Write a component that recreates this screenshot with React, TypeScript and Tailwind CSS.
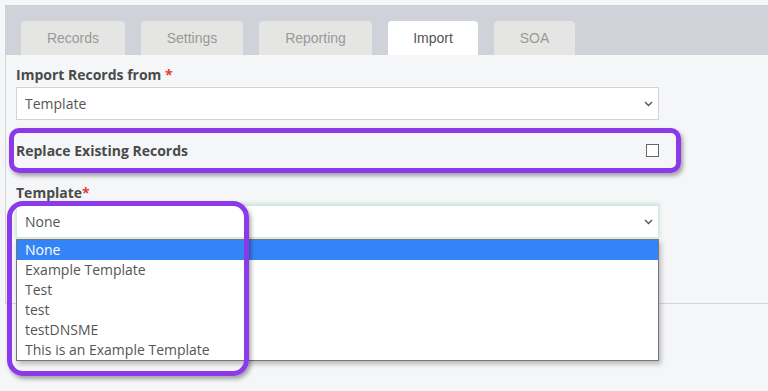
import React from "react";

const tabs = [
  { name: "Records", w: "w-[104px]" },
  { name: "Settings", w: "w-[102px]" },
  { name: "Reporting", w: "w-[113px]" },
  { name: "Import", w: "w-[90px]", active: true },
  { name: "SOA", w: "w-[81px]" },
];

const options = [
  "None",
  "Example Template",
  "Test",
  "test",
  "testDNSME",
  "This is an Example Template",
];

function Chevron() {
  return (
    <svg width="9" height="6" viewBox="0 0 9 6" className="text-[#555]">
      <polyline
        points="1,1 4.5,4.5 8,1"
        fill="none"
        stroke="currentColor"
        strokeWidth="1.4"
      />
    </svg>
  );
}

export default function App() {
  return (
    <div className="min-h-[391px] w-[768px] overflow-hidden bg-[#f5f6f8] pl-[5px] pt-[5px] font-['Open_Sans',sans-serif]">
      {/* tab strip */}
      <div className="flex h-[50px] items-end gap-4 bg-[#cfd2d9] pl-4">
        {tabs.map((t) => (
          <div
            key={t.name}
            className={`${t.w} flex h-[34px] items-center justify-center rounded-t-[4px] font-['Liberation_Sans',Arial,sans-serif] text-[14px] ${
              t.active ? "bg-white text-[#555]" : "bg-[#e5e6e4] text-[#999]"
            }`}
          >
            {t.name}
          </div>
        ))}
      </div>

      {/* panel */}
      <div className="border-b border-l border-[#d3d5d9] pb-[65px] pl-[10px] pt-[10px]">
        <div className="w-[643px]">
          <div className="h-5 text-[14px] font-bold leading-5 text-[#4a4a4a]">
            Import Records from <span className="text-[#e53935]">*</span>
          </div>
          <div className="mt-[2px] flex h-[33px] items-center justify-between border border-[#d3d3d3] bg-white pl-[8px] pr-[5px] text-[14px] text-[#555]">
            <span>Template</span>
            <Chevron />
          </div>

          {/* highlighted row */}
          <div className="-ml-[7px] -mr-[22px] mt-[8px] flex h-[45px] items-center justify-between rounded-[10px] border-[5px] border-[#8a3ae9] pl-[2px] pr-[17px] shadow-[2px_3px_4px_rgba(0,0,0,0.35)]">
            <span className="text-[14px] font-bold text-[#4a4a4a]">
              Replace Existing Records
            </span>
            <div className="h-[13px] w-[13px] border border-[#666] bg-white" />
          </div>

          <div className="mt-[10px] h-5 text-[14px] font-bold leading-5 text-[#4a4a4a]">
            Template<span className="text-[#e53935]">*</span>
          </div>
          <div className="relative mt-[2px]">
            <div className="flex h-[33px] items-center justify-between border border-[#d6e9de] bg-white pl-[8px] pr-[5px] text-[14px] text-[#555] shadow-[0_-1px_4px_rgba(120,200,150,0.45)]">
              <span>None</span>
              <Chevron />
            </div>

            {/* open list */}
            <div className="absolute left-0 top-[34px] z-10 w-[643px] border border-[#767676] bg-white shadow-[2px_3px_5px_rgba(0,0,0,0.25)]">
              {options.map((o, i) => (
                <div
                  key={o}
                  className={`h-5 pl-[8px] text-[14px] leading-5 ${
                    i === 0 ? "bg-[#3584f7] text-white" : "text-[#555]"
                  }`}
                >
                  {o}
                </div>
              ))}
            </div>

            {/* annotation outline */}
            <div className="pointer-events-none absolute -left-[9px] -top-[4px] z-20 h-[175px] w-[242px] rounded-[16px] border-[5px] border-[#8a3ae9] shadow-[2px_3px_4px_rgba(0,0,0,0.35)]" />
          </div>
        </div>
      </div>
    </div>
  );
}
